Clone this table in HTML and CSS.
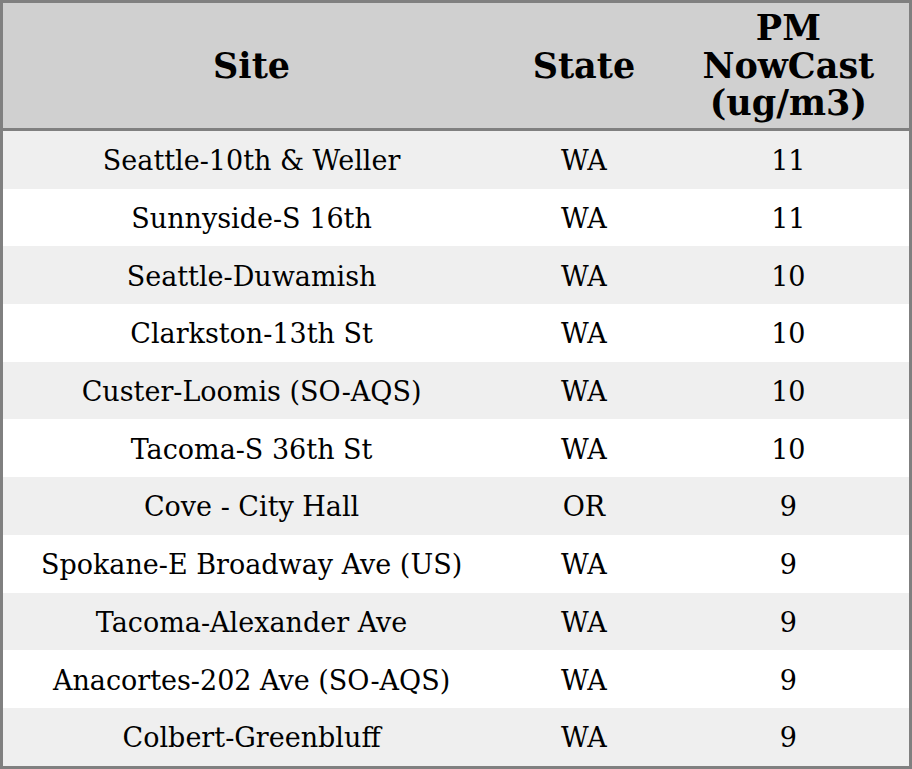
FILE: index.html
```html
<!DOCTYPE html>
<html>
<head>
<meta charset="utf-8">
<link rel="stylesheet" href="styles.css">
</head>
<body>
<table class="aq">
  <colgroup>
    <col class="c-site">
    <col class="c-state">
    <col class="c-pm">
  </colgroup>
  <thead>
    <tr><th>Site</th><th>State</th><th>PM<br>NowCast<br>(ug/m3)</th></tr>
  </thead>
  <tbody>
    <tr><td>Seattle-10th &amp; Weller</td><td>WA</td><td>11</td></tr>
    <tr><td>Sunnyside-S 16th</td><td>WA</td><td>11</td></tr>
    <tr><td>Seattle-Duwamish</td><td>WA</td><td>10</td></tr>
    <tr><td>Clarkston-13th St</td><td>WA</td><td>10</td></tr>
    <tr><td>Custer-Loomis (SO-AQS)</td><td>WA</td><td>10</td></tr>
    <tr><td>Tacoma-S 36th St</td><td>WA</td><td>10</td></tr>
    <tr><td>Cove - City Hall</td><td>OR</td><td>9</td></tr>
    <tr><td>Spokane-E Broadway Ave (US)</td><td>WA</td><td>9</td></tr>
    <tr><td>Tacoma-Alexander Ave</td><td>WA</td><td>9</td></tr>
    <tr><td>Anacortes-202 Ave (SO-AQS)</td><td>WA</td><td>9</td></tr>
    <tr><td>Colbert-Greenbluff</td><td>WA</td><td>9</td></tr>
  </tbody>
</table>
</body>
</html>
```
FILE: styles.css
```css
html, body {
  margin: 0;
  padding: 0;
  background: #ffffff;
}
.aq {
  width: 912px;
  border-collapse: collapse;
  border: 3px solid #808080;
  font-family: "DejaVu Serif", serif;
  color: #000;
}
.c-site { width: 497px; }
.c-state { width: 167px; }
.c-pm { width: 242px; }
.aq th {
  background: #d0d0d0;
  font-size: 35px;
  font-weight: bold;
  line-height: 37.5px;
  padding: 6px 0 6.5px 0;
  text-align: center;
  border-bottom: 3px solid #808080;
}
.aq td {
  font-size: 27px;
  line-height: 28px;
  padding: 16.35px 0 13.35px 0;
  text-align: center;
}
.aq tbody tr:nth-child(odd) td {
  background: #efefef;
}
```
